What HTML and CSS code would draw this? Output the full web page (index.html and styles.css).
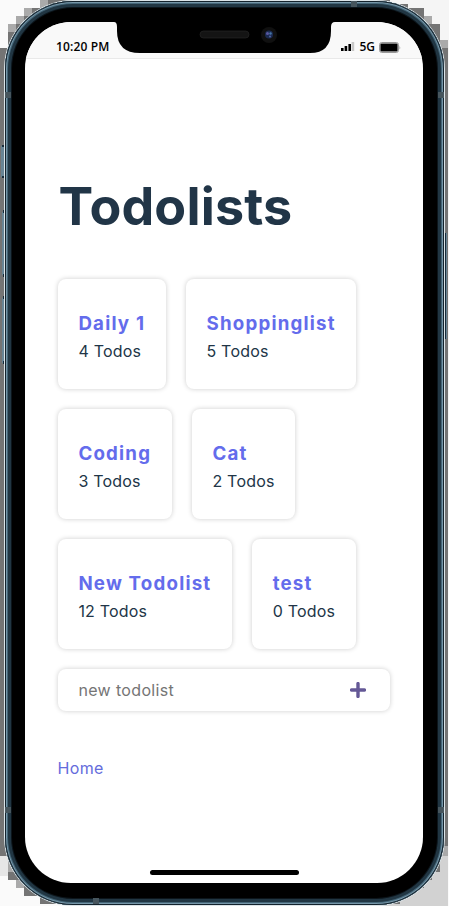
FILE: index.html
```html
<!DOCTYPE html>
<html lang="en">
<head>
<meta charset="utf-8">
<title>Todolists</title>
<link rel="stylesheet" href="styles.css">
</head>
<body>
<div class="stage">
  <svg class="backdrop" viewBox="0 0 449 906" shape-rendering="crispEdges" aria-hidden="true">
    <rect width="449" height="906" fill="#fafafa"/>
    <rect x="225" width="224" height="450" fill="#f5f5f5"/>
    <rect x="340" y="846" width="108" height="60" fill="#d2d2d2"/>
    <rect y="856" width="120" height="20" fill="#e6e6e6"/>
    <path fill="#747474" d="M0 48H8V32H16V24H24V16H32V8H48V0H390V4H408V8H424V16H424V24H432V24H440V40H448V846H448V856H440V872H432V880H424V888H408V896H400V904H40V896H24V888H16V880H8V856H0Z"/>
    <path fill="#aaa" d="M8 24h8v8H8zM16 16h8v8h-8zM24 8h8v8h-8zM40 0h8v8h-8zM424 16h8v8h-8zM440 40h8v8h-8zM440 846h8v10h-8zM8 856h8v16H8zM16 880h8v8h-8z"/>
    <path fill="#688494" d="M1 146h5v31H1zM2 212h4v63H2zM2 298h4v65H2zM443 233h4v106h-4z"/>
    <path fill="#182c3a" d="M2 145h3v2H2zM2 176h3v2H2zM3 210h2v3H3zM3 274h2v3H3zM3 296h2v3H3zM3 361h2v3H3zM444 233h2v106h-2z"/>
  </svg>
  <div class="phone">
    <div class="screen">
      <header class="status">
        <span class="time">10:20 PM</span>
        <div class="signal">
          <svg width="15" height="10" viewBox="0 0 15 10"><path d="M1 6h2.6v3H1zM4.6 4h2.6v5H4.6zM8.4 2H11v7H8.4z"/><path fill="#c8c8c8" d="M11.6 0h2.6v9h-2.6z"/></svg>
          <span class="network">5G</span>
          <svg width="22" height="11" viewBox="0 0 22 11"><rect x=".5" y=".5" width="19" height="10" rx="2.2" fill="#fff" stroke="#999"/><rect x="1.4" y="1.4" width="17.2" height="8.2" rx="1"/><path fill="#999" d="M20.5 3.5q1.4 2 0 4z"/></svg>
        </div>
      </header>
      <main class="content">
        <h1>Todolists</h1>
        <section class="lists">
          <article class="card"><h2>Daily 1</h2><p>4 Todos</p></article>
          <article class="card"><h2>Shoppinglist</h2><p>5 Todos</p></article>
          <article class="card"><h2>Coding</h2><p>3 Todos</p></article>
          <article class="card"><h2>Cat</h2><p>2 Todos</p></article>
          <article class="card"><h2>New Todolist</h2><p>12 Todos</p></article>
          <article class="card"><h2>test</h2><p>0 Todos</p></article>
        </section>
        <form class="add">
          <input type="text" placeholder="new todolist" aria-label="new todolist">
          <button type="button" aria-label="Add"><svg width="16" height="16" viewBox="0 0 16 16"><path d="M8 1.6v12.8M1.6 8h12.8" stroke="#645896" stroke-width="3.4" stroke-linecap="round"/></svg></button>
        </form>
        <a class="home" href="#">Home</a>
      </main>
      <div class="indicator"></div>
    </div>
  </div>
  <svg class="notch" width="218" height="34" viewBox="0 0 218 34" aria-hidden="true">
    <path d="M0 0H218V2Q214 2 214 7V11Q214 33 193 33H23Q0 33 0 11V7Q0 2 -3 2Z"/>
    <rect x="83" y="11" width="49" height="7" rx="3.5" fill="#141414" stroke="#292929" stroke-width=".6"/>
    <circle cx="152" cy="15" r="8" fill="#101010"/>
    <circle cx="152" cy="14.5" r="4" fill="#1b2b52"/>
    <circle cx="150.5" cy="13.5" r="1.5" fill="#5b58a0"/><circle cx="153.5" cy="13.5" r="1.2" fill="#4676a8"/><circle cx="153" cy="16.5" r="1" fill="#5261a1"/>
  </svg>
  <svg class="bands" viewBox="0 0 449 906" aria-hidden="true"><path fill="#46555d" d="M5 92h6v6H5zM438 92h6v6h-6zM5 807h6v6H5zM438 807h6v6h-6zM351 1h6v6h-6zM93 898h6v6h-6z"/></svg>
</div>
</body>
</html>
```
FILE: styles.css
```css
* { box-sizing: border-box; }
body {
  margin: 0;
  font-family: Inter, "Liberation Sans", sans-serif;
  color: #213547;
  background: #fafafa;
}
.stage {
  position: relative;
  width: 449px;
  height: 906px;
  padding: 1px 5px;
  overflow: hidden;
}
.backdrop, .bands {
  position: absolute;
  inset: 0;
  width: 449px;
  height: 906px;
}
.phone {
  position: relative;
  width: 439px;
  height: 904px;
  padding: 21px 21px 22px 20px;
  border-radius: 68px;
  background: #000;
  box-shadow: 0 0 0 1px #dbe4e8, inset 0 0 0 1px #13222c, inset 0 0 0 2px #7696a8,
    inset 0 0 0 3px #456678, inset 0 0 0 6px #213643, inset 0 0 0 7px #0c151b;
}
.screen {
  display: flex;
  flex-direction: column;
  height: 861px;
  border-radius: 46px;
  overflow: hidden;
  background: #fff;
}
.status {
  display: flex;
  justify-content: space-between;
  align-items: flex-start;
  height: 37px;
  padding: 17px 22px 0 31px;
  border-bottom: 1px solid #e9e9e9;
  background: #f9f9f9;
  font: 600 12px/16px "Open Sans", sans-serif;
  color: #000;
}
.time { letter-spacing: 0.15px; }
.signal { display: flex; align-items: center; }
.network { margin: 0 4px; }
.content { flex: 1; padding: 116px 33px 0 32.6px; }
h1 {
  margin: 0 0 40px 1px;
  font-size: 52px;
  line-height: 64px;
  font-weight: 700;
  letter-spacing: 0.15px;
}
.lists { display: flex; flex-wrap: wrap; gap: 20px 19.9px; }
.card {
  height: 110px;
  padding: 32px 20.6px 0 20.8px;
  border-radius: 8px;
  box-shadow: 0 0 5px rgba(0, 0, 0, 0.2);
}
h2 {
  margin: 0;
  font-size: 18.7px;
  line-height: 25px;
  font-weight: 700;
  letter-spacing: 1.2px;
  color: #646cec;
}
p {
  margin: 0;
  font-size: 16px;
  line-height: 30px;
  letter-spacing: 0.2px;
}
.add {
  display: flex;
  align-items: center;
  justify-content: space-between;
  height: 42px;
  margin-top: 20px;
  padding: 0 24px 0 20.8px;
  border-radius: 8px;
  box-shadow: 0 0 5px rgba(0, 0, 0, 0.2);
}
.add input {
  width: 220px;
  padding: 0;
  border: 0;
  outline: 0;
  background: none;
  font: 16px/24px Inter, sans-serif;
  letter-spacing: 0.35px;
}
.add input::placeholder { color: #757575; }
.add button { display: flex; padding: 0; border: 0; background: none; }
.home {
  display: block;
  margin-top: 45px;
  font-size: 16px;
  line-height: 24px;
  letter-spacing: 0.3px;
  color: #646cdc;
  text-decoration: none;
}
.indicator {
  width: 149px;
  height: 5px;
  margin: 0 auto 8px;
  border-radius: 3px;
  background: #000;
}
.notch { position: absolute; left: 117px; top: 20px; overflow: visible; }
```
